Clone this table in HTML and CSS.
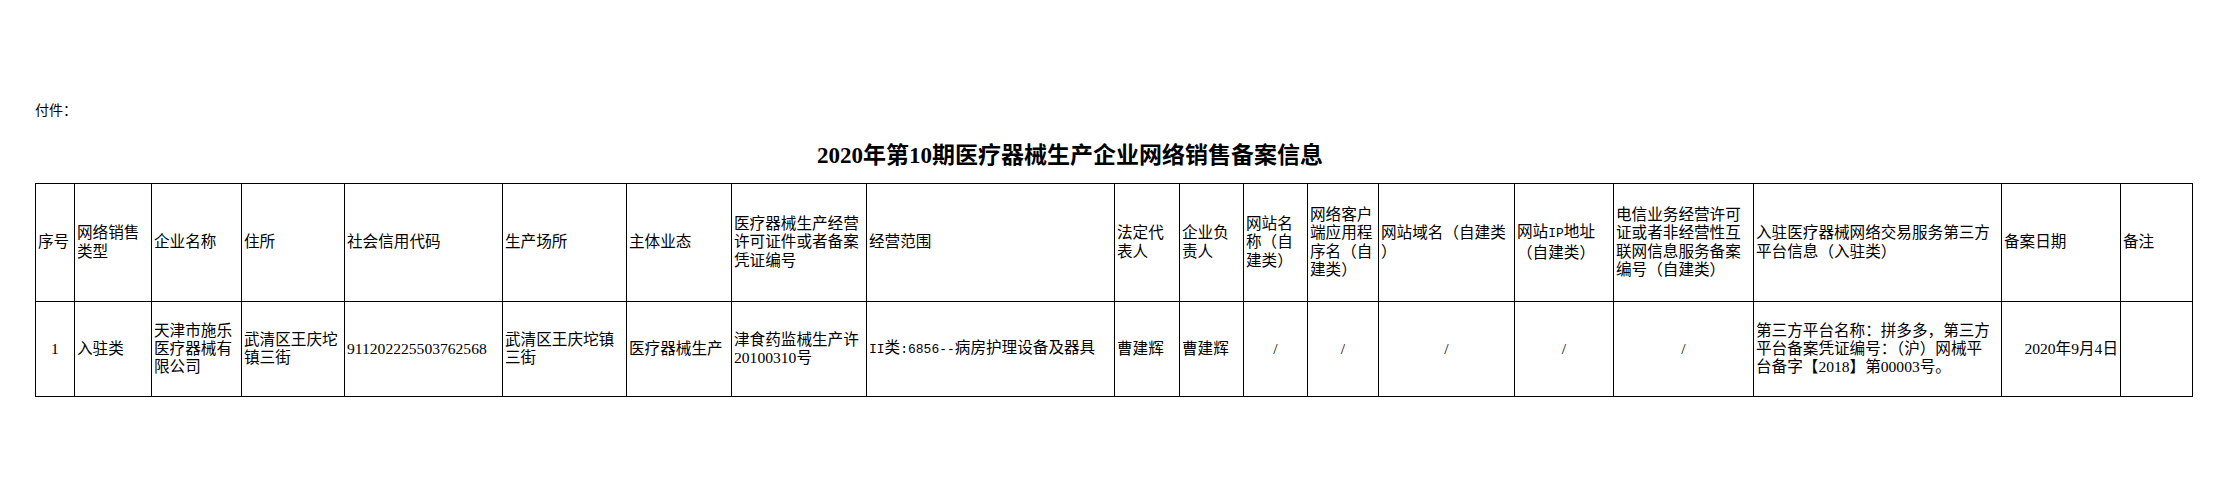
FILE: index.html
```html
<!DOCTYPE html>
<html lang="zh-CN">
<head>
<meta charset="utf-8">
<title>2020年第10期医疗器械生产企业网络销售备案信息</title>
<link rel="stylesheet" href="styles.css">
</head>
<body>
<div class="page">
  <div class="note">付件：</div>
  <h1 class="title">2020年第10期医疗器械生产企业网络销售备案信息</h1>
  <table class="grid">
    <colgroup>
      <col class="c39"><col class="c77"><col class="c90"><col class="c103"><col class="c158">
      <col class="c124"><col class="c105"><col class="c135"><col class="c248"><col class="c65">
      <col class="c64"><col class="c64"><col class="c71"><col class="c136"><col class="c99">
      <col class="c140"><col class="c248"><col class="c119"><col class="c72">
    </colgroup>
    <tr class="head">
      <td>序号</td>
      <td>网络销售<br>类型</td>
      <td>企业名称</td>
      <td>住所</td>
      <td>社会信用代码</td>
      <td>生产场所</td>
      <td>主体业态</td>
      <td>医疗器械生产经营<br>许可证件或者备案<br>凭证编号</td>
      <td>经营范围</td>
      <td>法定代<br>表人</td>
      <td>企业负<br>责人</td>
      <td>网站名<br>称（自<br>建类）</td>
      <td>网络客户<br>端应用程<br>序名（自<br>建类）</td>
      <td>网站域名（自建类<br>）</td>
      <td>网站<span class="mono">IP</span>地址<br>（自建类）</td>
      <td>电信业务经营许可<br>证或者非经营性互<br>联网信息服务备案<br>编号（自建类）</td>
      <td>入驻医疗器械网络交易服务第三方<br>平台信息（入驻类）</td>
      <td>备案日期</td>
      <td>备注</td>
    </tr>
    <tr class="data">
      <td class="center">1</td>
      <td>入驻类</td>
      <td>天津市施乐<br>医疗器械有<br>限公司</td>
      <td>武清区王庆坨<br>镇三街</td>
      <td>911202225503762568</td>
      <td>武清区王庆坨镇<br>三街</td>
      <td>医疗器械生产</td>
      <td>津食药监械生产许<br>20100310号</td>
      <td><span class="mono">II</span>类<span class="mono">:6856--</span>病房护理设备及器具</td>
      <td>曹建辉</td>
      <td>曹建辉</td>
      <td class="center">/</td>
      <td class="center">/</td>
      <td class="center">/</td>
      <td class="center">/</td>
      <td class="center">/</td>
      <td>第三方平台名称：拼多多，第三方<br>平台备案凭证编号：（沪）网械平<br>台备字【2018】第00003号。</td>
      <td class="right">2020年9月4日</td>
      <td></td>
    </tr>
  </table>
</div>
</body>
</html>
```
FILE: styles.css
```css
html, body {
  margin: 0;
  padding: 0;
  background: #ffffff;
  color: #000000;
}

.page {
  padding: 100px 35px 0 35px;
  font-family: "Liberation Serif", "Noto Sans CJK SC", serif;
}

.note {
  font-family: "Noto Sans CJK SC", sans-serif;
  font-size: 14px;
  line-height: 19px;
  height: 19px;
}

.title {
  margin: 22px 0 0 0;
  padding-right: 87px;
  width: 2157px;
  box-sizing: border-box;
  text-align: center;
  font-family: "Liberation Serif", "Noto Sans CJK SC", serif;
  font-weight: 700;
  font-size: 23px;
  line-height: 30px;
  height: 30px;
}

.grid {
  margin-top: 12px;
  border-collapse: collapse;
  table-layout: fixed;
  width: 2157px;
  font-size: 15.6px;
  line-height: 18.3px;
}

.grid td {
  border: 1px solid #000000;
  padding: 0 2px;
  vertical-align: middle;
  text-align: left;
  white-space: nowrap;
  overflow: hidden;
}

.mono {
  font-family: "Liberation Mono", monospace;
  font-size: 13px;
}

.head td {
  height: 117px;
}

.data td {
  height: 94px;
}

.grid td.center {
  text-align: center;
}

.grid td.right {
  text-align: right;
}

.c39 { width: 39px; }
.c77 { width: 77px; }
.c90 { width: 90px; }
.c103 { width: 103px; }
.c158 { width: 158px; }
.c124 { width: 124px; }
.c105 { width: 105px; }
.c135 { width: 135px; }
.c248 { width: 248px; }
.c65 { width: 65px; }
.c64 { width: 64px; }
.c71 { width: 71px; }
.c136 { width: 136px; }
.c99 { width: 99px; }
.c140 { width: 140px; }
.c119 { width: 119px; }
.c72 { width: 72px; }
```
